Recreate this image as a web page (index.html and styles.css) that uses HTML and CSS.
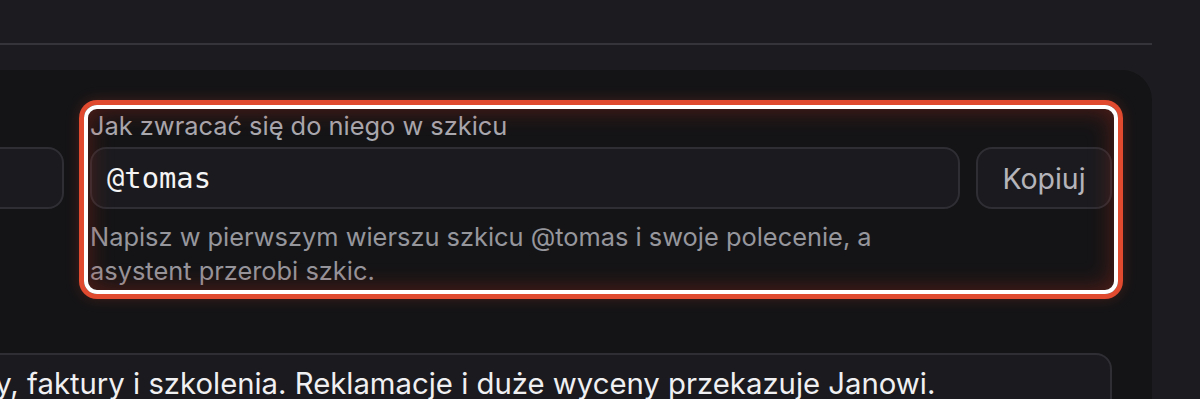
FILE: index.html
```html
<!DOCTYPE html>
<html lang="pl">
<head>
<meta charset="utf-8">
<title>Asystent</title>
<link rel="stylesheet" href="styles.css">
</head>
<body>
<div class="page">
  <header class="topbar"></header>
  <section class="card">
    <div class="row">
      <div class="field">
        <label class="label">Imię i nazwisko</label>
        <div class="input">Tomasz Wiśniewski</div>
      </div>
      <div class="field field-focus">
        <label class="label">Jak zwracać się do niego w szkicu</label>
        <div class="input-row">
          <div class="input mono">@tomas</div>
          <button class="btn">Kopiuj</button>
        </div>
        <p class="help">Napisz w pierwszym wierszu szkicu @tomas i swoje polecenie, a asystent przerobi szkic.</p>
        <div class="focus-ring"></div>
      </div>
    </div>
    <div class="field field-wide">
      <label class="label">Zakres obowiązków</label>
      <div class="textarea">Odpowiada za oferty, rozliczenia, umowy, faktury i szkolenia. Reklamacje i duże wyceny przekazuje Janowi.</div>
    </div>
  </section>
</div>
</body>
</html>
```

FILE: styles.css
```css
* { box-sizing: border-box; }

html, body {
  margin: 0;
  height: 100%;
  background: #1c1c20;
  overflow: hidden;
}

body {
  font-family: Inter, "Noto Sans", sans-serif;
  color: #ececee;
}

.page {
  margin-left: -620px;
  padding-right: 48px;
}

.topbar {
  height: 45px;
  border-bottom: 2px solid #34343a;
}

.card {
  margin-top: 25px;
  background: #141416;
  border-radius: 30px;
  padding: 41px 40px 40px;
  min-height: 600px;
}

.row {
  display: grid;
  grid-template-columns: 1fr 1022px;
  column-gap: 26px;
  align-items: start;
}

.field {
  position: relative;
  display: flex;
  flex-direction: column;
}

.label {
  font-size: 25.4px;
  line-height: 30px;
  color: #a9a9b0;
  margin-bottom: 6px;
}

.input-row {
  display: flex;
  gap: 16px;
}

.input {
  height: 62px;
  display: flex;
  align-items: center;
  padding: 0 15px;
  background: #1b1b1f;
  border: 2px solid #2e2e34;
  border-radius: 16px;
  font-size: 25.4px;
  color: #ececee;
}

.input-row .input {
  flex: 1;
}

.mono {
  font-family: "DejaVu Sans Mono", "Liberation Mono", monospace;
  font-size: 28.8px;
  color: #f4f4f5;
}

.btn {
  height: 62px;
  width: 136px;
  background: #1b1b1f;
  border: 2px solid #2e2e34;
  border-radius: 16px;
  font-family: Inter, "Noto Sans", sans-serif;
  font-size: 28.5px;
  color: #b4b4ba;
  padding: 0;
}

.help {
  margin: 11px 0 0;
  font-size: 25.4px;
  line-height: 34px;
  color: #96969d;
  max-width: 820px;
}

.focus-ring {
  position: absolute;
  inset: -6px;
  border: 4px solid #ffffff;
  border-radius: 13px;
  box-shadow:
    0 0 0 5px #e04a2e,
    0 0 14px 5px rgba(224, 74, 46, 0.22),
    inset 0 0 24px rgba(190, 45, 25, 0.4);
  pointer-events: none;
}

.field-wide {
  margin-top: 29px;
}

.textarea {
  background: #1b1b1f;
  border: 2px solid #2e2e34;
  border-radius: 16px;
  padding: 10px 20px;
  font-size: 29.3px;
  line-height: 38px;
  color: #f0f0f2;
  min-height: 140px;
  white-space: nowrap;
}
```
